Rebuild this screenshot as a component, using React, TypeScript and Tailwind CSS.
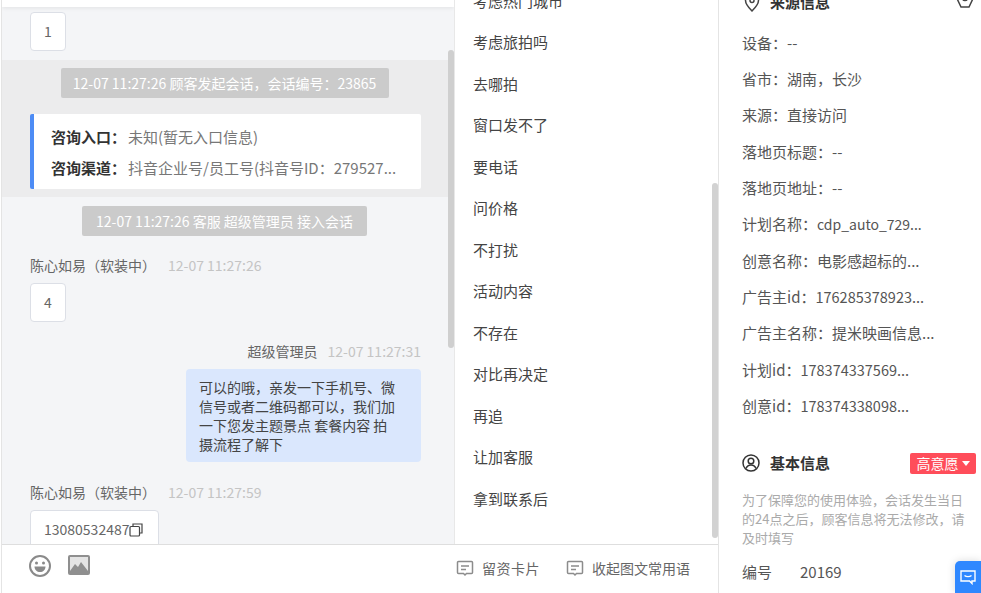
import React from 'react';

const quickReplies = ['考虑热门城市', '考虑旅拍吗', '去哪拍', '窗口发不了', '要电话', '问价格', '不打扰', '活动内容', '不存在', '对比再决定', '再追', '让加客服', '拿到联系后'];

const sourceRows = [
  { label: '设备：', value: '--' },
  { label: '省市：', value: '湖南，长沙' },
  { label: '来源：', value: '直接访问' },
  { label: '落地页标题：', value: '--' },
  { label: '落地页地址：', value: '--' },
  { label: '计划名称：', value: 'cdp_auto_729...', valueClass: 'text-[14px]' },
  { label: '创意名称：', value: '电影感超标的...' },
  { label: '广告主id：', value: '176285378923...', valueClass: 'text-[14.5px]' },
  { label: '广告主名称：', value: '提米映画信息...' },
  { label: '计划id：', value: '178374337569...', valueClass: 'text-[14.5px]' },
  { label: '创意id：', value: '178374338098...', valueClass: 'text-[14.5px]' },
];

const NumberBubble = ({ value }: { value: string }) => (
  <div className="ml-[28px] flex h-[39px] w-[36px] items-center justify-center rounded-[4px] border border-[#dcdfe6] bg-white text-[14px] text-[#666]">
    {value}
  </div>
);

const MetaLine = ({ name, time, right }: { name: string; time: string; right?: boolean }) => (
  <div className={`flex h-[20px] items-center text-[14px] leading-[20px] ${right ? 'mr-[33px] justify-end gap-[10px]' : 'ml-[28px] gap-[12px]'}`}>
    <span className="text-[#666]">{name}</span>
    <span className="text-[#c4c4c4]">{time}</span>
  </div>
);

const SystemPill = ({ children, width }: { children: React.ReactNode; width: string }) => (
  <div className="pr-[7px]">
    <div className={`mx-auto flex h-[30px] items-center justify-center rounded-[2px] bg-[#cbcbcb] text-[14px] text-white ${width}`}>
      {children}
    </div>
  </div>
);

const CommentIcon = () => (
  <svg width="18" height="17" viewBox="0 0 18 17" fill="none" stroke="#8c8c8c" strokeWidth="1.5">
    <path d="M2.5 1.5h13a1 1 0 0 1 1 1v10a1 1 0 0 1-1 1h-5l-1.500 1.500-1.500-1.500h-5a1 1 0 0 1-1-1v-10a1 1 0 0 1 1-1z" />
    <path d="M5 6h8M5 9.500h5" />
  </svg>
);

export default function App() {
  return (
    <div className="flex h-[593px] w-[981px] overflow-hidden bg-white font-['Noto_Sans_CJK_SC','Liberation_Sans',sans-serif]">
      {/* chat + quick replies */}
      <div className="ml-[1px] flex h-full w-[718px] flex-col border-x border-[#e4e4e4]">
        <div className="flex h-[544px] min-h-0">
          <div className="relative w-[452px] overflow-hidden bg-[#f4f5f7]">
            <div className="h-[7px] bg-white shadow-[0_1px_4px_rgba(0,0,0,0.08)]" />
            <div className="mt-[5px]">
              <NumberBubble value="1" />
            </div>
            <div className="mt-[9px] h-[137px] bg-[#ececed] pt-[8px]">
              <SystemPill width="w-[328px]">12-07 11:27:26 顾客发起会话，会话编号：23865</SystemPill>
              <div className="ml-[28px] mt-[16px] h-[75px] w-[391px] rounded-[2px] border-l-[4px] border-[#4d8cf5] bg-white pl-[17px] pt-[7px] text-[15px] leading-[31px] text-[#777]">
                <div className="whitespace-nowrap"><b className="mr-[2px] font-bold text-[#333]">咨询入口：</b>未知(暂无入口信息)</div>
                <div className="whitespace-nowrap"><b className="mr-[2px] font-bold text-[#333]">咨询渠道：</b>抖音企业号/员工号(抖音号ID：279527...</div>
              </div>
            </div>
            <div className="mt-[9px]">
              <SystemPill width="w-[285px]">12-07 11:27:26 客服 超级管理员 接入会话</SystemPill>
            </div>
            <div className="mt-[19px]">
              <MetaLine name="陈心如易（软装中）" time="12-07 11:27:26" />
            </div>
            <div className="mt-[8px]">
              <NumberBubble value="4" />
            </div>
            <div className="mt-[19px]">
              <MetaLine right name="超级管理员" time="12-07 11:27:31" />
            </div>
            <div className="ml-[184px] mt-[8px] h-[93px] w-[235px] rounded-[4px] bg-[#dae7fd] py-[9px] pl-[13px] pr-[22px] text-[14px] leading-[19px] text-[#444]">
              可以的哦，亲发一下手机号、微信号或者二维码都可以，我们加一下您发主题景点 套餐内容 拍摄流程了解下
            </div>
            <div className="mt-[20px]">
              <MetaLine name="陈心如易（软装中）" time="12-07 11:27:59" />
            </div>
            <div className="ml-[28px] mt-[8px] flex h-[39px] w-[129px] items-center rounded-[4px] border border-[#dcdfe6] bg-white pl-[13px] text-[14px] text-[#666]">
              13080532487
              <svg width="14" height="14" viewBox="0 0 14 14" fill="none" stroke="#444" strokeWidth="1.200" className="shrink-0">
                <rect x="1" y="3.500" width="9.500" height="9.500" rx="1" />
                <path d="M4 3.500V1h9v9h-2.500" />
              </svg>
            </div>
            <div className="absolute right-0 top-[50px] h-[298px] w-[6px] rounded-[3px] bg-[#cfcfcf]" />
          </div>
          <div className="relative flex-1 overflow-hidden border-l border-[#e8e8e8]">
            <div className="-mt-[20px] pl-[18px] text-[15px] text-[#444]">
              {quickReplies.map(item => (
                <div key={item} className="flex h-[41.5px] items-center">{item}</div>
              ))}
            </div>
            <div className="absolute right-0 top-[183px] h-[355px] w-[6px] rounded-[3px] bg-[#d2d2d2]" />
          </div>
        </div>
        <div className="flex h-[49px] border-t border-[#dedede] bg-white">
          <div className="ml-[27px] mt-[10px] flex items-start gap-[17px]">
            <svg width="22" height="22" viewBox="0 0 22 22" fill="none">
              <circle cx="11" cy="11" r="10" stroke="#8a8a8a" strokeWidth="2" />
              <circle cx="7.500" cy="8" r="1.500" fill="#8a8a8a" />
              <circle cx="14.500" cy="8" r="1.500" fill="#8a8a8a" />
              <path d="M5.500 11.500h11c0 3.500-2.500 5.500-5.500 5.500s-5.500-2-5.500-5.500z" fill="#8a8a8a" />
            </svg>
            <svg width="22" height="20" viewBox="0 0 22 20">
              <rect width="22" height="20" rx="2" fill="#8f8f8f" />
              <rect x="2" y="2" width="18" height="14" fill="#e4e4e4" />
              <path d="M2 16l5-7 3 3 3-5 7 9z" fill="#8f8f8f" />
            </svg>
          </div>
          <div className="ml-auto mr-[28px] mt-[15px] flex h-[17px] items-center text-[14px] text-[#666]">
            <CommentIcon />
            <span className="ml-[8px] tracking-[0.5px]">留资卡片</span>
            <span className="ml-[26px]"><CommentIcon /></span>
            <span className="ml-[8px]">收起图文常用语</span>
          </div>
        </div>
      </div>

      {/* customer info */}
      <div className="relative flex-1 overflow-hidden pl-[23px] text-[15px] text-[#555]">
        <div className="-mt-[9px] flex h-[22px] items-center whitespace-nowrap font-bold text-[#333]">
          <svg width="16" height="19" viewBox="0 0 16 19" fill="none" stroke="#444" strokeWidth="1.500" className="ml-[2px] shrink-0">
            <path d="M8 18C4 14 1.500 11 1.500 7.500a6.500 6.500 0 0 1 13 0C14.500 11 12 14 8 18z" />
            <circle cx="8" cy="7.500" r="2" />
          </svg>
          <span className="ml-[10px]">来源信息</span>
          <svg width="20" height="20" viewBox="0 0 20 20" fill="none" stroke="#444" strokeWidth="1.500" className="ml-[125px] shrink-0 -translate-y-[2px]">
            <path d="M5 1.500h10l3.500 6L14 17H6L1.500 7.500z" />
            <circle cx="10" cy="8" r="2.500" />
          </svg>
        </div>
        <div className="mt-[12px]">
          {sourceRows.map(row => (
            <div key={row.label} className="flex h-[36.3px] items-center whitespace-nowrap">
              <span>{row.label}</span>
              <span className={row.valueClass}>{row.value}</span>
            </div>
          ))}
        </div>
        <div className="mt-[28px] flex h-[22px] items-center whitespace-nowrap text-[#333]">
          <svg width="18" height="18" viewBox="0 0 18 18" fill="none" stroke="#333" strokeWidth="1.500" className="shrink-0">
            <circle cx="9" cy="9" r="8" />
            <circle cx="9" cy="7" r="2.800" />
            <path d="M4 14.500c1-2.500 3-3.500 5-3.500s4 1 5 3.500" />
          </svg>
          <span className="ml-[10px] font-bold">基本信息</span>
          <div className="ml-[80px] flex h-[21px] w-[66px] shrink-0 items-center justify-center gap-[3px] rounded-[2px] bg-[#ff4d5a] text-[14px] text-white">
            高意愿
            <span className="h-0 w-0 border-x-[4px] border-t-[5px] border-x-transparent border-t-white" />
          </div>
        </div>
        <p className="mt-[16px] w-[228px] text-[13px] leading-[19px] text-[#aaa]">
          为了保障您的使用体验，会话发生当日的24点之后，顾客信息将无法修改，请及时填写
        </p>
        <div className="mt-[15px] flex h-[20px] items-center">
          <span className="w-[58px]">编号</span>
          <span>20169</span>
        </div>
        <div className="absolute bottom-0 right-0 flex h-[32px] w-[26px] items-center justify-center rounded-tl-[5px] bg-[#2f88ff] shadow-[0_0_8px_rgba(0,0,0,0.15)]">
          <svg width="16" height="15" viewBox="0 0 16 15" fill="none" stroke="white" strokeWidth="1.400">
            <path d="M1 1h14v10h-3v2.500L9.500 11H1z" />
            <path d="M4.500 5.500c1.800 1.500 5.200 1.500 7 0" />
          </svg>
        </div>
      </div>
    </div>
  );
}
